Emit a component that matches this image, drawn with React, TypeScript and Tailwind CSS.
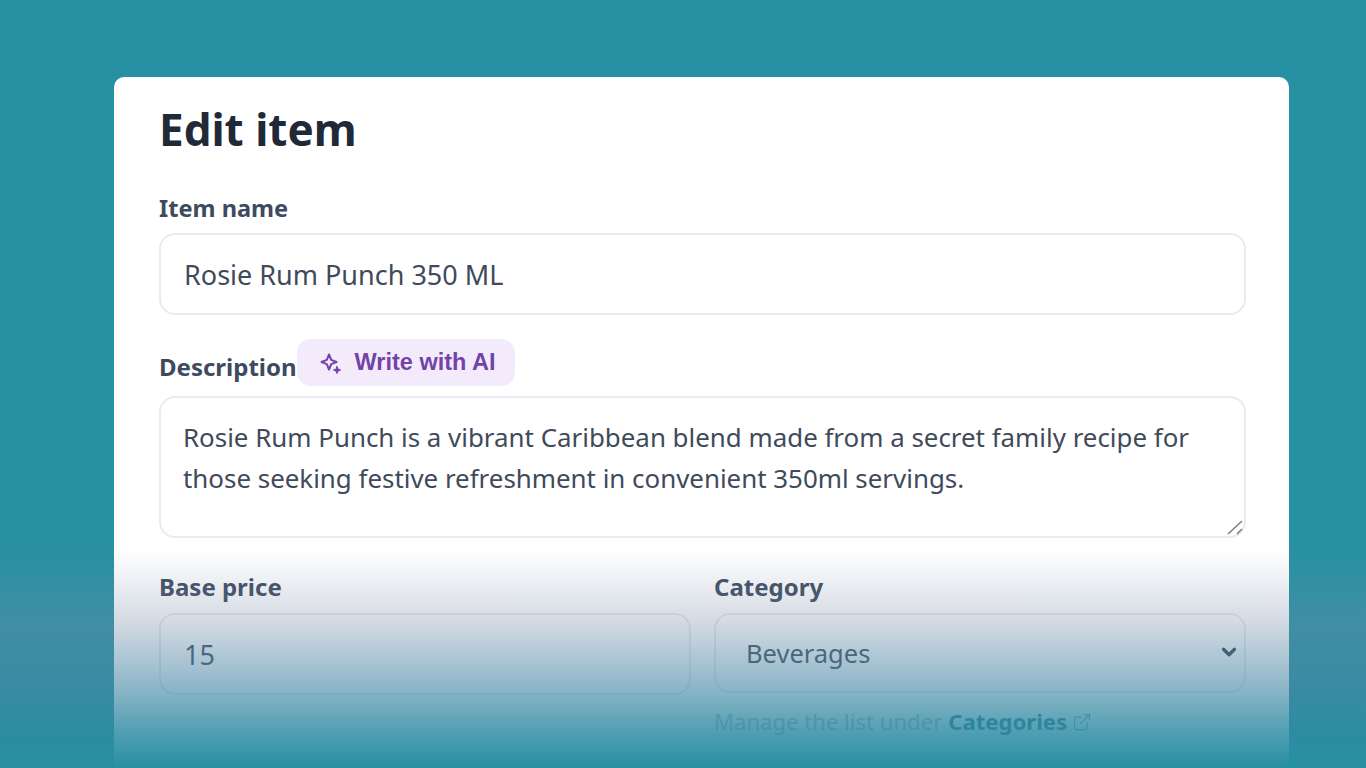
import { ChevronDown, ExternalLink } from "lucide-react";

const labelClass = "block text-[24px] leading-[24px] font-bold text-[#3d4a60]";
const fieldClass =
  "w-full rounded-[16px] border-2 border-[#e9ebf2] bg-white text-[#3f4a5b] outline-none";

const Sparkle = () => (
  <svg width="24" height="24" viewBox="0 0 24 24" fill="none" stroke="#7343a8" strokeWidth="2" strokeLinejoin="round" strokeLinecap="round">
    <path d="M10 3.5 L12.2 8.8 L17.5 11 L12.2 13.2 L10 18.5 L7.8 13.2 L2.5 11 L7.8 8.8 Z" />
    <path d="M18 15.5 L19 18 L21.5 19 L19 20 L18 22.5 L17 20 L14.5 19 L17 18 Z" fill="#7343a8" strokeWidth="1" />
  </svg>
);

export default function App() {
  return (
    <div className="relative h-screen overflow-hidden bg-[#2790a2] pt-[77px] font-['Noto_Sans',sans-serif]">
      <div className="ml-[114px] h-[691px] w-[1175px] rounded-t-[10px] bg-white pl-[45px] pr-[43px] pt-[22px]">
        <h1 className="flex h-[60px] items-center text-[44px] font-bold text-[#1f2937]">
          Edit item
        </h1>

        <label className="mt-[37px] block">
          <span className="block text-[23.6px] leading-[24px] font-bold text-[#3d4a60]">Item name</span>
          <input
            defaultValue="Rosie Rum Punch 350 ML"
            className={`${fieldClass} mt-[13px] h-[82px] px-[23px] text-[27px]`}
          />
        </label>

        <div className="mt-[24px] flex items-end">
          <span className={`${labelClass} mb-[7px]`}>Description</span>
          <button className="flex h-[47px] w-[218px] items-center gap-[12px] rounded-[14px] bg-[#f3ebfb] pl-[22px] font-['Liberation_Sans',sans-serif] text-[23.5px] font-bold text-[#7343a8]">
            <Sparkle />
            Write with AI
          </button>
        </div>

        <div className="relative mt-[10px]">
          <textarea
            defaultValue="Rosie Rum Punch is a vibrant Caribbean blend made from a secret family recipe for those seeking festive refreshment in convenient 350ml servings."
            className={`${fieldClass} block h-[142px] resize-none px-[22px] pb-[20px] pt-[19px] text-[25.9px] leading-[41px]`}
          />
          {/* resize grip */}
          <svg className="absolute bottom-[3px] right-[2px] h-[16px] w-[17px]" viewBox="0 0 17 16" stroke="#808080" strokeWidth="1.6">
            <path d="M1 15 L15 2" />
            <path d="M10 15 L15 10" />
          </svg>
        </div>

        <div className="mt-[37px] grid grid-cols-2 gap-[23px]">
          <label className="block">
            <span className={labelClass}>Base price</span>
            <input defaultValue="15" className={`${fieldClass} mt-[14px] h-[82px] px-[23px] text-[27px]`} />
          </label>
          <div>
            <span className={labelClass}>Category</span>
            <div className="relative mt-[14px]">
              <select
                defaultValue="Beverages"
                className={`${fieldClass} h-[80px] appearance-none pl-[30px] text-[25.5px]`}
              >
                <option>Beverages</option>
              </select>
              <ChevronDown className="pointer-events-none absolute right-[6px] top-[28px] h-[22px] w-[22px] text-[#2f3e52]" strokeWidth={3.5} />
            </div>
            <p className="mt-[17px] flex h-[24px] items-center text-[22.1px] text-[#b0b7c3]">
              Manage the list under <span className="ml-[6px] font-bold text-[#1f6f8b]">Categories</span>
              <ExternalLink className="ml-[5px] h-[20px] w-[20px] text-[#6fa8ba]" strokeWidth={1.5} />
            </p>
          </div>
        </div>
      </div>

      {/* fade over the lower part of the dialog */}
      <div className="pointer-events-none absolute inset-x-0 bottom-0 h-[218px] bg-[linear-gradient(to_bottom,rgba(120,139,168,0)_0%,rgba(120,139,168,0.31)_32%,rgba(70,135,165,0.6)_62%,rgba(45,140,162,0.85)_85%,#2790a2_100%)]" />
    </div>
  );
}
